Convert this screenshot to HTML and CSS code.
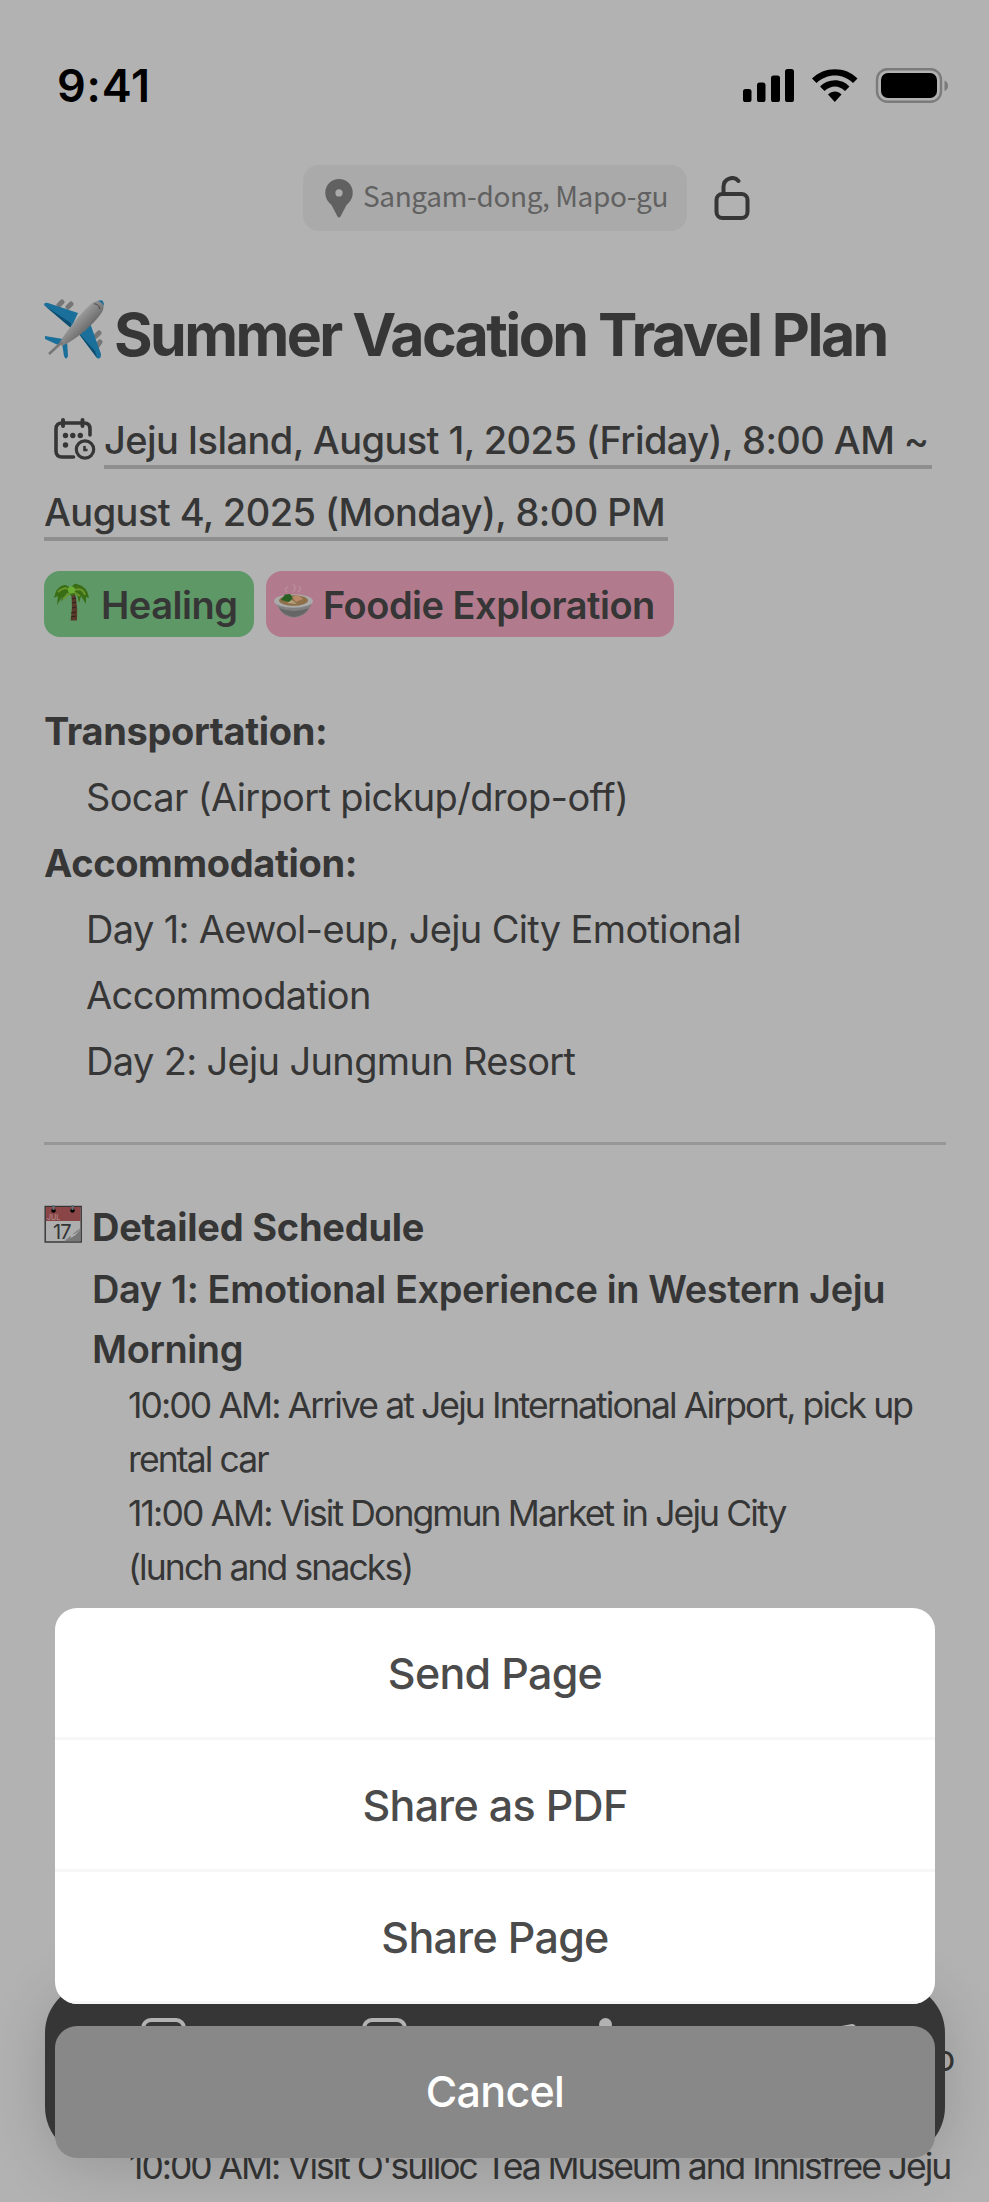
FILE: index.html
```
<!DOCTYPE html>
<html lang="en">
<head>
<meta charset="utf-8">
<title>Summer Vacation Travel Plan</title>
<link rel="stylesheet" href="styles.css">
</head>
<body>
<main class="screen">
  <header class="status">
    <span class="clock">9:41</span>
    <svg class="status-icons" width="206" height="36" viewBox="0 0 206 36">
      <rect x="1" y="21" width="8.5" height="13" rx="2.6"/>
      <rect x="15" y="14.500" width="8.500" height="19.500" rx="2.600"/>
      <rect x="29" y="7.500" width="9" height="26.500" rx="2.600"/>
      <rect x="43" y="1" width="9" height="33" rx="2.600"/>
      <path d="M70 10.500C82 -2 104 -2 115.500 10.500L111 15C101 5 85 5 74.500 15Z"/>
      <path d="M78 18.500C86 10 100 10 107.500 18.500L103 23C97 17 89 17 82.500 23Z"/>
      <path d="M86 26.500C90 22.500 96 22.500 99.500 26.500L92.800 34Z"/>
      <rect x="135" y="1.200" width="64" height="32.600" rx="10.500" fill="none" stroke="#7b7b7b" stroke-width="2.400"/>
      <rect x="139" y="5" width="56" height="25" rx="7"/>
      <path d="M202.500 12.500Q206 14 206 17.700Q206 21.500 202.500 23Z" fill="#7b7b7b"/>
    </svg>
  </header>

  <div class="location-bar">
    <div class="location">
      <svg width="28" height="39" viewBox="0 0 28 39"><path fill="#616161" fill-rule="evenodd" d="M14 0A13.700 13.700 0 0 1 27.700 14C27.700 19 25 23 21.500 26L15.500 37.500Q14 39.500 12.500 37.500L6.500 26C3 23 .3 19 .3 14A13.700 13.700 0 0 1 14 0ZM14 10.300A3.600 3.600 0 1 0 14 17.500A3.600 3.600 0 1 0 14 10.300Z"/></svg>
      <span>Sangam-dong, Mapo-gu</span>
    </div>
    <svg class="lock" width="36" height="44" viewBox="0 0 36 44" fill="none" stroke="#363636" stroke-width="4" stroke-linecap="round"><rect x="2.500" y="18" width="31" height="24" rx="6"/><path d="M9.500 17V11C9.500 2 20 -.5 24.500 5"/></svg>
  </div>

  <h1 class="title">
    <svg width="60" height="60" viewBox="0 0 60 60">
      <defs><linearGradient id="hull" x1="0" y1="0" x2="1" y2="1"><stop offset=".3" stop-color="#aaa"/><stop offset=".75" stop-color="#555"/></linearGradient></defs>
      <g stroke="#767676" stroke-width="5" stroke-linecap="round"><path d="M15 6L18 3M24 8L27 5M52 37L55 34M53 47L56 43"/></g>
      <path fill="#1a6f9b" d="M0 6Q0 3 4 4L34 14L27 29ZM32 31L46 24L57 55Q57 61 53 59ZM1 37L19 40L14 46L1 40ZM18 44L23 41L24 57Q22 62 20 57Z"/>
      <path fill="#0d4e70" d="M1 7L27 24V29ZM32 31L53 59L51 52Z"/>
      <path fill="url(#hull)" d="M16 43C24 30 37 14 46 6C53 -1 62 1 59 11C54 22 33 40 20 46Q16 48 16 43Z"/>
      <path fill="#1a6f9b" d="M54 2Q60 -1 60 7Q58 3 54 2Z"/>
      <path d="M50 5Q54 4 56 10" stroke="#444" fill="none"/><path d="M5 55L18 43" stroke="#777" stroke-width="2.500"/>
    </svg>
    <span>Summer Vacation Travel Plan</span>
  </h1>

  <div class="dates">
    <div class="date-line">
      <svg class="date-icon" width="42" height="42" viewBox="0 0 42 42" fill="none" stroke="#363636" stroke-width="3.600" stroke-linecap="round">
        <path d="M19.500 39H8Q2 39 2 33V11Q2 5 8 5H30Q36 5 36 11V17"/><path d="M9 2V8M28.500 2V8" stroke-width="4"/>
        <g fill="#363636" stroke="none"><circle cx="11.500" cy="17.500" r="2.700"/><circle cx="18.800" cy="17.500" r="2.700"/><circle cx="26.300" cy="17.500" r="2.700"/><circle cx="11.500" cy="27" r="2.700"/></g>
        <circle cx="31" cy="31.500" r="8.700" stroke-width="3.200"/><path d="M30.500 28V32H33.500" stroke-width="2.600" stroke-linecap="butt"/>
      </svg>
      <span class="underlined first">Jeju Island, August 1, 2025 (Friday), 8:00 AM ~</span>
    </div>
    <div class="date-line"><span class="underlined second">August 4, 2025 (Monday), 8:00 PM</span></div>
  </div>

  <div class="tags">
    <div class="tag healing">
      <svg width="36" height="38" viewBox="0 0 36 38">
        <path d="M17 9Q21 9 22 15Q24 26 23 37.500H16.500Q19 25 17 9Z" fill="#58392a"/><path d="M18 16L22 15M18 20L22 19M18 25L22 24M17 30L22 29M17 34L22 33" stroke="#2d2019"/>
        <path d="M17 6Q10 -3 2 8L0 15L4 13L3 22L8 14L7 19L13 10L18 13L23 11L25 20L27 13L32 21V14L35 15Q33 3 23 1Q19 0 17 6Z" fill="#3a6e16"/>
        <path d="M17 8Q11 2 4 9M18 8Q28 3 31 12M17 9L9 16M18 8L26 13" stroke="#68952b" stroke-width="2" fill="none"/><circle cx="17.500" cy="7" r="3.500" fill="#69ae32"/>
      </svg>
      <span>Healing</span>
    </div>
    <div class="tag foodie">
      <svg width="40" height="34" viewBox="0 0 40 34">
        <path d="M13 8Q9 5 14 3M19 8Q23 4 19 0M24 8Q28 6 25 2" fill="none" stroke="#c4aab2" stroke-width="1.400" opacity=".4"/>
        <path d="M2 17H38Q35 32 20 33.500Q6 33 2 17Z" fill="#808080"/><ellipse cx="19.500" cy="17" rx="19.500" ry="6.800" fill="#aaa"/>
        <ellipse cx="19.500" cy="16.500" rx="14.500" ry="5.200" fill="#8d7048"/><path d="M7 16L11 10.500L16 10L19 14L15 18Z" fill="#285f22"/><path d="M18 13L24 11L29 15L22 18Z" fill="#b98969"/><path d="M13 19L18 16L23 20Z" fill="#b2a17f"/><path d="M5 24Q20 30 35 24Q30 32 20 33Q10 32 5 24Z" fill="#666"/>
      </svg>
      <span>Foodie Exploration</span>
    </div>
  </div>

  <section class="details">
    <h2>Transportation:</h2>
    <p>Socar (Airport pickup/drop-off)</p>
    <h2>Accommodation:</h2>
    <p>Day 1: Aewol-eup, Jeju City Emotional<br>Accommodation</p>
    <p>Day 2: Jeju Jungmun Resort</p>
  </section>

  <section class="schedule">
    <div class="schedule-head">
      <svg width="38" height="38" viewBox="0 0 38 38">
        <rect x="1.200" y="1.500" width="36" height="35.500" fill="#aeaeae" stroke="#333" stroke-width="1.400"/><path d="M1.900 2H36.500V16H1.900Z" fill="#8a4646"/>
        <path d="M20 36.300L36.500 23V36.300Z" fill="#777"/>
        <circle cx="9.500" cy="5.500" r="2.200"/><circle cx="28.500" cy="5.500" r="2.200"/><path d="M9.500 0V5M28.500 0V5" stroke="#65717a" stroke-width="2"/>
        <text x="3" y="14.500" class="cal-month">JUL</text><text x="9" y="34" class="cal-day">17</text>
        <path d="M20 36.300Q28 34 27 30Q33 29 36.500 23Q35 30 20 36.300Z" fill="#b5b5b5"/>
      </svg>
      <h2>Detailed Schedule</h2>
    </div>
    <h3>Day 1: Emotional Experience in Western Jeju</h3>
    <h3>Morning</h3>
    <div class="events">
      <p>10:00 AM: Arrive at Jeju International Airport, pick up<br>rental car</p>
      <p>11:00 AM: Visit Dongmun Market in Jeju City<br>(lunch and snacks)</p>
    </div>
  </section>

  <p class="peek-end">o</p>
  <p class="peek-last">10:00 AM: Visit O'sulloc Tea Museum and Innisfree Jeju</p>

  <nav class="toolbar">
    <i class="box-icon"></i><i class="box-icon"></i><i class="dot-icon"></i>
    <svg class="tip-icon" width="20" height="4" viewBox="0 0 20 4"><path d="M0 3L16 0Q19 0 20 3V4H0Z" fill="#b2b2b2"/></svg>
  </nav>

  <div class="actions">
    <div class="sheet">
      <button>Send Page</button>
      <button>Share as PDF</button>
      <button>Share Page</button>
    </div>
    <button class="cancel">Cancel</button>
  </div>
</main>
</body>
</html>
```
FILE: styles.css
```
* { box-sizing: border-box; }
body { margin: 0; background: #b2b2b2; }
h1, h2, h3, p { margin: 0; }
svg { display: block; flex: none; }

.screen {
  position: relative;
  width: 989px;
  height: 2202px;
  overflow: hidden;
  background: #b2b2b2;
  color: #363636;
  font-family: Inter, "Liberation Sans", sans-serif;
  white-space: nowrap;
}

.status {
  display: flex;
  justify-content: space-between;
  padding: 68px 41px 0 57px;
  height: 165px;
  color: #000;
}
.clock { padding-top: 1px; font-size: 45px; font-weight: 600; line-height: 33px; letter-spacing: .8px; }

.location-bar { display: flex; margin-left: 303px; height: 66px; }
.location {
  display: flex;
  width: 384px;
  padding: 14px 0 0 22px;
  gap: 10px;
  border-radius: 16px;
  background: #aaa;
  color: #616161;
  font: 28px/32px "Noto Sans CJK KR", sans-serif;
  letter-spacing: -.4px;
}
.lock { margin: 11px 0 0 27px; }

.title {
  display: flex;
  margin: 68px 0 0 44px;
  gap: 10px;
  font-size: 59px;
  line-height: 72px;
  font-weight: 700;
  letter-spacing: -2.57px;
}

.dates { margin: 29px 0 0 44px; font-size: 38px; font-weight: 500; letter-spacing: -.58px; }
.date-line { display: flex; height: 72px; }
.date-icon { margin: 18px 8px 0 10px; }
.underlined {
  height: 69px;
  line-height: 80px;
  background: linear-gradient(#8e8e8e, #8e8e8e) bottom / 100% 4px no-repeat;
}
.first { width: 828px; }
.second { width: 624px; }

.tags { display: flex; gap: 12px; margin: 27px 0 0 44px; }
.tag {
  display: flex;
  height: 66px;
  border-radius: 16px;
  font-size: 38px;
  line-height: 68px;
  font-weight: 600;
  letter-spacing: -.5px;
}
.healing { width: 210px; padding-left: 10px; gap: 11px; background: #5e9866; }
.healing svg { margin-top: 12px; }
.foodie { width: 408px; padding-left: 8px; gap: 9px; background: #b27b8d; }
.foodie svg { margin-top: 13px; }

.details { margin: 61px 43px 0 44px; height: 447px; border-bottom: 3px solid #979797; font-size: 38px; line-height: 66px; }
.details h2 { font-size: 38px; font-weight: 700; letter-spacing: -.35px; }
.details p { padding-left: 42px; letter-spacing: -.65px; }

.schedule { margin: 60px 0 0 44px; }
.schedule-head { display: flex; gap: 10px; margin-bottom: 10px; }
.schedule h2 { font-size: 38px; font-weight: 700; line-height: 44px; letter-spacing: -.25px; }
.schedule h3 { padding-left: 48px; font-size: 38px; font-weight: 600; line-height: 60px; letter-spacing: -.4px; }
.cal-month { font: 7px Inter, sans-serif; letter-spacing: 0; fill: #b79999; }
.cal-day { font: 20px Inter, sans-serif; letter-spacing: -1px; fill: #333; }
.events { padding-left: 84px; }

.events, .peek-end, .peek-last { font-size: 35.5px; line-height: 54px; letter-spacing: -1.9px; }
.peek-end, .peek-last { position: absolute; }
.peek-end { left: 934px; top: 2032px; }
.peek-last { left: 129px; top: 2140px; letter-spacing: -2.05px; }

.toolbar {
  position: absolute;
  left: 45px;
  top: 1983px;
  width: 900px;
  height: 174px;
  border-radius: 50px;
  background: #363636;
  box-shadow: 0 10px 60px rgba(0, 0, 0, .16);
}
.toolbar > * { position: absolute; }
.box-icon { top: 35px; left: 96px; width: 45px; height: 45px; border: 4px solid #b2b2b2; border-radius: 10px; }
.box-icon + .box-icon { left: 317px; }
.dot-icon { top: 35px; left: 554px; width: 13px; height: 13px; border-radius: 50%; background: #b2b2b2; }
.tip-icon { top: 41px; left: 791px; }

.actions { position: absolute; left: 55px; top: 1608px; width: 880px; display: grid; gap: 22px; }
.sheet { display: grid; overflow: hidden; border-radius: 22px; background: #fff; }
button {
  display: block;
  height: 132px;
  padding: 1px 0 0;
  border: 0;
  border-bottom: 3px solid #f7f7f7;
  background: none;
  color: #4b4b4b;
  font: 500 43px/128px Inter, sans-serif;
  letter-spacing: -.7px;
}
.cancel { padding: 0 0 2px; border: 0; border-radius: 22px; background: #888; color: #fff; }
```
